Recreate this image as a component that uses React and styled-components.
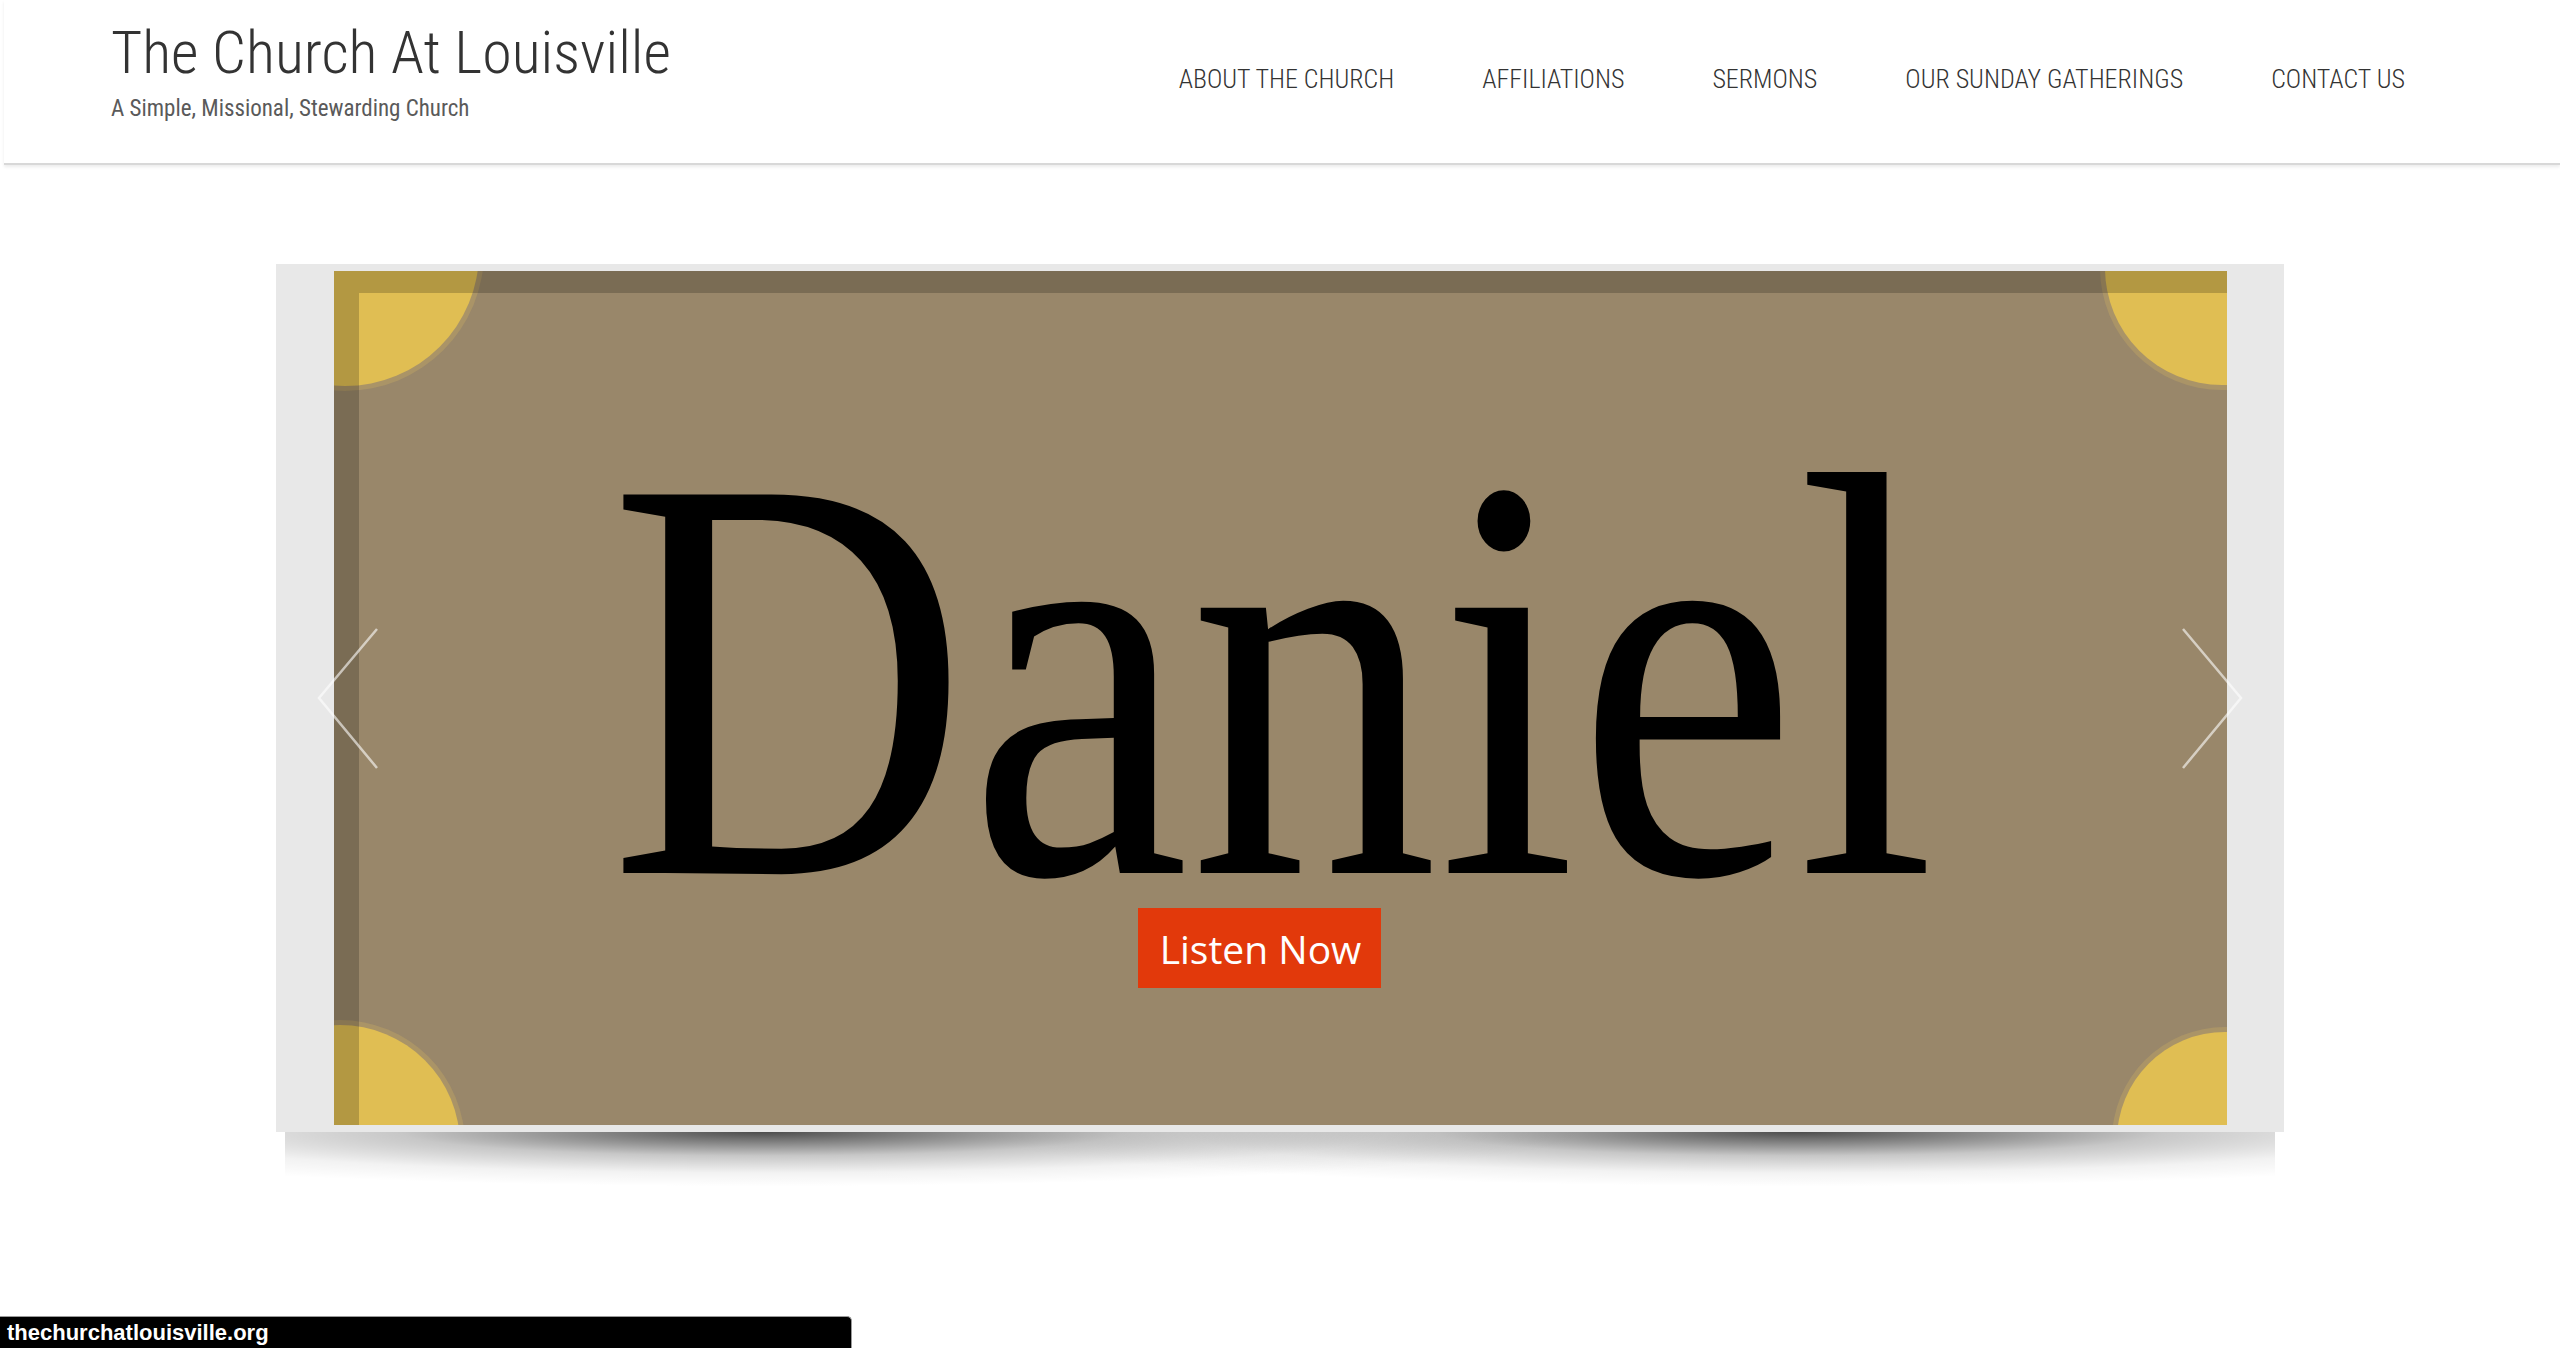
import React from "react";
import styled, { createGlobalStyle } from "styled-components";

const GlobalStyle = createGlobalStyle`
  html, body { margin: 0; padding: 0; background: #ffffff; }
  body { overflow: hidden; width: 2560px; height: 1348px; }
  * { box-sizing: border-box; }
`;

const Page = styled.div`
  width: 2560px;
  height: 1348px;
  position: relative;
  background: #fff;
`;

const Header = styled.header`
  margin-left: 4px;
  height: 165px;
  padding: 23px 155px 0 107px;
  display: flex;
  justify-content: space-between;
  align-items: flex-start;
  border-bottom: 2px solid #d8d8d8;
  box-shadow: 0 2px 3px rgba(0, 0, 0, 0.08);
`;

const Brand = styled.div`
  display: flex;
  flex-direction: column;
`;

const SiteTitle = styled.h1`
  margin: 0;
  font-family: "Roboto Condensed", Roboto, "Liberation Sans", sans-serif;
  font-weight: 300;
  font-size: 60px;
  line-height: 60px;
  color: #333;
`;

const Tagline = styled.p`
  margin: 14px 0 0 0;
  font-family: "Roboto Condensed", Roboto, "Liberation Sans", sans-serif;
  font-weight: 400;
  font-size: 23px;
  line-height: 23px;
  color: #5a5a5a;
`;

const Nav = styled.nav`
  display: flex;
  gap: 88px;
  padding-top: 43px;
`;

const NavItem = styled.a`
  font-family: "Roboto Condensed", Roboto, "Liberation Sans", sans-serif;
  font-weight: 300;
  font-size: 26px;
  line-height: 26px;
  color: #333;
  text-transform: uppercase;
  text-decoration: none;
  white-space: nowrap;
`;

const Main = styled.main`
  padding-top: 99px;
  display: flex;
  flex-direction: column;
  align-items: center;
`;

const Frame = styled.div`
  position: relative;
  width: 2008px;
  padding: 7px 57px 7px 58px;
  background: #e8e8e8;
`;

const Slide = styled.div`
  position: relative;
  width: 1893px;
  height: 854px;
  overflow: hidden;
  display: flex;
  flex-direction: column;
  align-items: center;
  padding-top: 207px;
`;

const SlideArt = styled.svg`
  position: absolute;
  inset: 0;
  width: 100%;
  height: 100%;
`;

const SlideTitle = styled.div`
  position: relative;
  font-family: "Liberation Serif", "Times New Roman", serif;
  font-size: 578px;
  line-height: 400px;
  color: #000;
  transform: scaleX(0.861);
  margin-right: 16px;
  white-space: nowrap;
`;

const ListenButton = styled.a`
  position: relative;
  height: 80px;
  display: flex;
  align-items: center;
  margin-top: 30px;
  padding: 0 20px 0 22px;
  margin-right: 42px;
  background: #e2390b;
  color: #fff;
  font-family: "Open Sans", "Noto Sans", sans-serif;
  font-weight: 500;
  font-size: 39px;
  text-decoration: none;
`;

const Arrow = styled.svg`
  position: absolute;
  top: 363px;
  ${(p) => (p.$side === "left" ? "left: 42px;" : "right: 42px;")}
  width: 62px;
  height: 142px;
  overflow: visible;
`;

const LiftShadow = styled.div`
  width: 1990px;
  height: 80px;
  background:
    radial-gradient(ellipse 52% 85% at 24% 0%, rgba(0, 0, 0, 0.7), rgba(0, 0, 0, 0.22) 35%, rgba(0, 0, 0, 0.05) 60%, rgba(0, 0, 0, 0) 80%),
    radial-gradient(ellipse 52% 85% at 76% 0%, rgba(0, 0, 0, 0.7), rgba(0, 0, 0, 0.22) 35%, rgba(0, 0, 0, 0.05) 60%, rgba(0, 0, 0, 0) 80%);
`;

const StatusBar = styled.div`
  position: absolute;
  left: 0;
  bottom: 0;
  width: 852px;
  height: 32px;
  background: #000;
  border: 1px solid #9a9a9a;
  border-bottom: none;
  border-left: none;
  border-top-right-radius: 5px;
  display: flex;
  align-items: center;
  padding-left: 7px;
  color: #fff;
  font-family: "Liberation Sans", Arial, sans-serif;
  font-size: 22px;
  font-weight: 600;
`;

const navItems = [
  "About The Church",
  "Affiliations",
  "Sermons",
  "Our Sunday Gatherings",
  "Contact Us",
];

function Corners() {
  const corners = [
    { cx: 11, cy: -19, r: 134 },
    { cx: 1888, cy: -3, r: 117 },
    { cx: 6, cy: 874, r: 120 },
    { cx: 1891, cy: 869, r: 108 },
  ];
  return (
    <SlideArt viewBox="0 0 1893 854" preserveAspectRatio="none">
      <rect x="0" y="0" width="1893" height="854" fill="#99876a" />
      {corners.map((c, i) => (
        <g key={i}>
          <circle cx={c.cx} cy={c.cy} r={c.r + 5} fill="rgba(190,165,100,0.45)" />
          <circle cx={c.cx} cy={c.cy} r={c.r} fill="#e0be53" />
        </g>
      ))}
      <rect x="0" y="0" width="1893" height="22" fill="rgba(0,0,0,0.2)" />
      <rect x="0" y="22" width="25" height="832" fill="rgba(0,0,0,0.2)" />
    </SlideArt>
  );
}

export default function App() {
  return (
    <Page>
      <GlobalStyle />
      <Header>
        <Brand>
          <SiteTitle>The Church At Louisville</SiteTitle>
          <Tagline>A Simple, Missional, Stewarding Church</Tagline>
        </Brand>
        <Nav>
          {navItems.map((n) => (
            <NavItem key={n} href="#">
              {n}
            </NavItem>
          ))}
        </Nav>
      </Header>
      <Main>
        <Frame>
          <Slide>
            <Corners />
            <SlideTitle>Daniel</SlideTitle>
            <ListenButton href="#">Listen Now</ListenButton>
          </Slide>
          <Arrow $side="left" viewBox="0 0 62 142">
            <polyline
              points="59,2 1,71 59,141"
              fill="none"
              stroke="rgba(255,255,255,0.6)"
              strokeWidth="2.5"
            />
          </Arrow>
          <Arrow $side="right" viewBox="0 0 62 142">
            <polyline
              points="3,2 61,71 3,141"
              fill="none"
              stroke="rgba(255,255,255,0.6)"
              strokeWidth="2.5"
            />
          </Arrow>
        </Frame>
        <LiftShadow />
      </Main>
      <StatusBar>thechurchatlouisville.org</StatusBar>
    </Page>
  );
}
